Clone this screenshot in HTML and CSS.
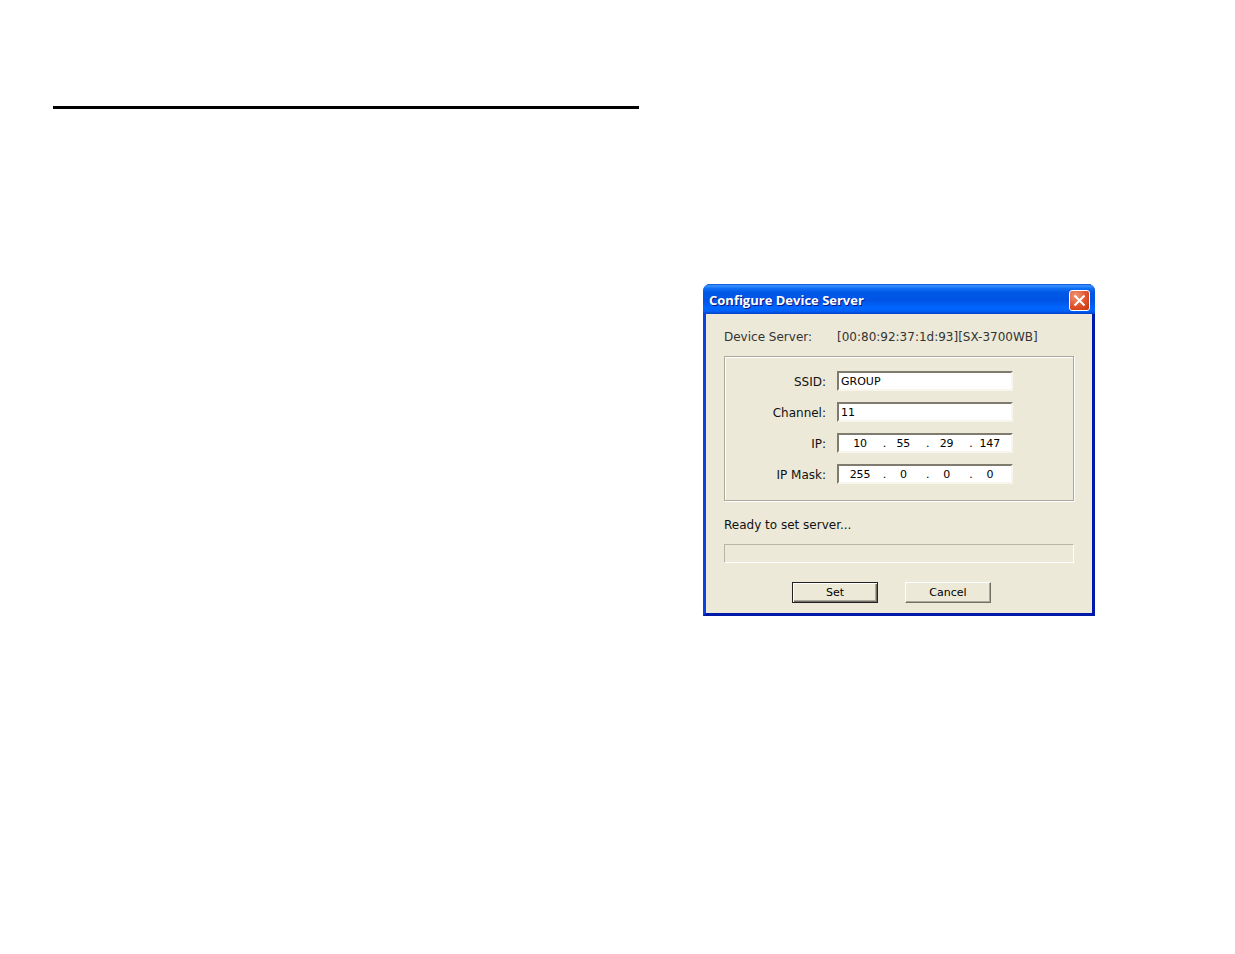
FILE: index.html
```html
<!DOCTYPE html>
<html lang="en">
<head>
    <meta charset="UTF-8">
    <meta name="viewport" content="width=device-width, initial-scale=1.0">
    <title>Configure Device Server</title>
    <link rel="stylesheet" href="styles.css">
</head>
<body>

    <main class="page">
        <div class="left-column">
            <hr class="rule">
        </div>

        <form class="dialog" onsubmit="return false">
            <header class="title-bar">
                <h1 class="title">Configure Device Server</h1>
                <button type="button" class="close" aria-label="Close">
                    <svg width="13" height="13" viewBox="0 0 13 13" fill="none" stroke="#fff" stroke-width="2">
                        <path d="M1.5 1.5L11.5 11.5M11.5 1.5L1.5 11.5"/>
                    </svg>
                </button>
            </header>

            <div class="dialog-body">
                <div class="device">
                    <span class="device-label">Device Server:</span>
                    <span>[00:80:92:37:1d:93][SX-3700WB]</span>
                </div>

                <div class="group">
                    <label for="ssid">SSID:</label>
                    <input type="text" class="field" id="ssid" value="GROUP">

                    <label for="channel">Channel:</label>
                    <input type="text" class="field" id="channel" value="11">

                    <label for="ip">IP:</label>
                    <div class="field ip-field">
                        <input type="text" id="ip" value="10">
                        <span>.</span>
                        <input type="text" aria-label="IP, part 2" value="55">
                        <span>.</span>
                        <input type="text" aria-label="IP, part 3" value="29">
                        <span>.</span>
                        <input type="text" aria-label="IP, part 4" value="147">
                    </div>

                    <label for="mask">IP Mask:</label>
                    <div class="field ip-field">
                        <input type="text" id="mask" value="255">
                        <span>.</span>
                        <input type="text" aria-label="IP Mask, part 2" value="0">
                        <span>.</span>
                        <input type="text" aria-label="IP Mask, part 3" value="0">
                        <span>.</span>
                        <input type="text" aria-label="IP Mask, part 4" value="0">
                    </div>
                </div>

                <p class="status">Ready to set server...</p>
                <div class="progress" role="progressbar" aria-label="Progress" aria-valuenow="0"></div>

                <div class="buttons">
                    <button type="submit" class="btn btn-default">Set</button>
                    <button type="button" class="btn">Cancel</button>
                </div>
            </div>
        </form>
    </main>

</body>
</html>
```
FILE: styles.css
```css
* {
    box-sizing: border-box;
}

body {
    margin: 0;
    background: #fff;
    color: #111;
    font-family: Verdana, "DejaVu Sans", sans-serif;
    font-size: 12px;
    line-height: 14px;
}

.page {
    display: grid;
    grid-template-columns: minmax(0, 1fr) 392px;
    column-gap: 64px;
    align-items: start;
    padding: 106px 140px 40px 53px;
}

.rule {
    height: 3px;
    margin: 0;
    border: 0;
    background: #000;
}

/* Window frame */
.dialog {
    margin-top: 178px;
    border: 3px solid;
    border-color: #0a4be0 #0019a8 #0019a8 #0842e0;
    border-top: 0;
    border-radius: 7px 7px 0 0;
    background: #0054e3;
}

.title-bar {
    display: flex;
    align-items: center;
    justify-content: space-between;
    height: 30px;
    margin: 0 -3px;
    padding: 2px 5px 0 6px;
    border-radius: 7px 7px 0 0;
    background: linear-gradient(#0a4fd8 0, #3c94ff 6%, #1270f5 14%, #0058e6 28%, #0054e6 55%, #0066ff 80%, #0062f8 90%, #0040c8 100%);
}

.title {
    margin: 0;
    color: #fff;
    font-family: "Trebuchet MS", "Open Sans", sans-serif;
    font-size: 13px;
    font-weight: 700;
    line-height: 16px;
    text-shadow: 1px 1px #0a1883;
}

.close {
    display: flex;
    align-items: center;
    justify-content: center;
    width: 21px;
    height: 21px;
    padding: 0;
    border: 1px solid #fff;
    border-radius: 3px;
    background: radial-gradient(circle at 30% 25%, #ee9878, #e0512c 55%, #c43208);
}

.dialog-body {
    padding: 16px 18px 10px;
    background: #ece9d8;
}

.device {
    display: flex;
    color: #333;
}

.device-label {
    width: 113px;
}

/* Etched box round the fields */
.group {
    display: grid;
    grid-template-columns: 101px 176px;
    column-gap: 11px;
    row-gap: 11px;
    align-items: center;
    margin-top: 12px;
    padding: 14px 0 16px;
    border: 1px solid #aca899;
    box-shadow: inset 1px 1px #fff, 1px 1px #fff;
}

.group label {
    padding-top: 1px;
    text-align: right;
}

.field {
    width: 100%;
    height: 20px;
    padding: 0 2px;
    border: 2px solid;
    border-color: #7f7b6f #f8f6ec #f8f6ec #7f7b6f;
    background: #fff;
    color: #000;
    font-family: inherit;
    font-size: 11px;
}

.ip-field {
    display: flex;
    align-items: center;
    padding: 2px 4px 0;
}

.ip-field input {
    flex: 1;
    min-width: 0;
    padding: 0;
    border: 0;
    background: none;
    color: #000;
    font: inherit;
    text-align: center;
}

.ip-field span {
    width: 9px;
    text-align: right;
}

.status {
    margin: 17px 0 12px;
}

.progress {
    height: 19px;
    border: 1px solid;
    border-color: #b8b5a4 #fff #fff #b8b5a4;
}

.buttons {
    display: flex;
    gap: 27px;
    margin-top: 19px;
    padding-left: 68px;
}

.btn {
    width: 86px;
    height: 21px;
    padding: 0;
    border: 1px solid;
    border-color: #fff #716f64 #716f64 #fff;
    background: #ece9d8;
    box-shadow: inset -1px -1px #aca899;
    color: #000;
    font-family: inherit;
    font-size: 11px;
}

.btn-default {
    border-color: #222;
    box-shadow: inset 1px 1px #fff, inset -1px -1px #716f64, inset -2px -2px #aca899;
}
```
